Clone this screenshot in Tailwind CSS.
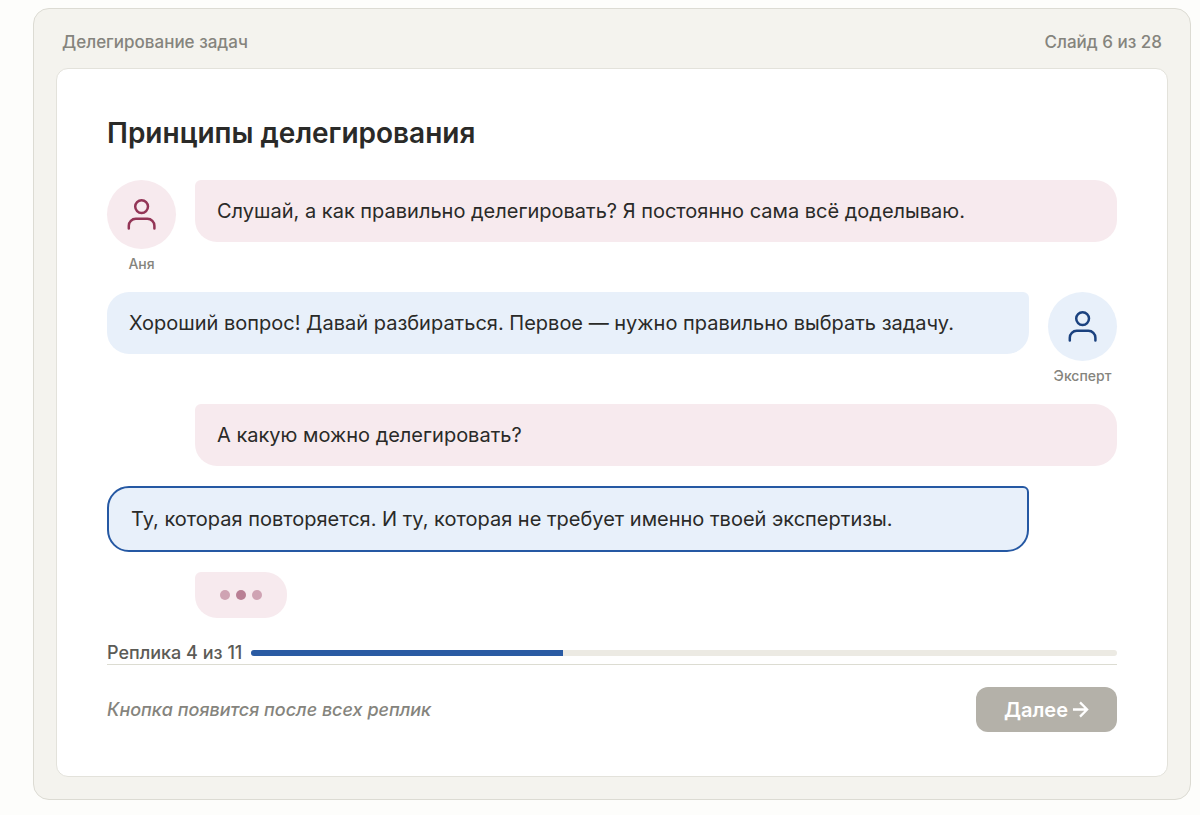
<!DOCTYPE html>
<html lang="ru">
<head>
<meta charset="utf-8">
<meta name="viewport" content="width=device-width, initial-scale=1">
<title>Делегирование задач</title>
<script src="https://cdn.jsdelivr.net/npm/@tailwindcss/browser@4"></script>
</head>
<body class="min-h-screen bg-[#fdfdfb] pt-2 pr-[9px] pb-4 pl-[33px] font-['Inter',sans-serif] text-[#2a2a28]">
<main class="rounded-2xl border border-[#dcdbd3] bg-[#f4f3ee] px-[22px] pb-[22px]">
  <header class="flex items-center justify-between px-[6px] pt-[21px] pb-[14px] text-[17px] leading-6 font-medium text-[#85847d]">
    <span>Делегирование задач</span>
    <span>Слайд 6 из 28</span>
  </header>
  <section class="rounded-xl border border-[#e3e2db] bg-white px-[50px] pt-[46px] pb-[44px]">
    <h1 class="text-[28px] leading-9 font-semibold">Принципы делегирования</h1>
    <div class="mt-[29px] flex flex-col gap-5 text-[20px] leading-[30px]">
      <div class="flex items-start gap-[19px]">
        <div class="flex w-[69px] shrink-0 flex-col items-center gap-1.5">
          <div class="flex size-[69px] items-center justify-center rounded-full bg-[#f7eaee] text-[#933556]">
            <svg class="size-[34px]" viewBox="0 0 34 34" fill="none" stroke="currentColor" stroke-width="2.5" stroke-linecap="round" aria-hidden="true"><circle cx="16.6" cy="8.6" r="6.4"/><path d="M3.8 30.4v-2.6a7 7 0 0 1 7-7h11.6a7 7 0 0 1 7 7v2.6"/></svg>
          </div>
          <span class="text-[14px] leading-[17px] font-medium text-[#85847d]">Аня</span>
        </div>
        <p class="flex-1 rounded-[22px] rounded-tl-md bg-[#f7eaee] px-[22px] py-4">Слушай, а как правильно делегировать? Я постоянно сама всё доделываю.</p>
      </div>
      <div class="flex items-start gap-[19px]">
        <p class="flex-1 rounded-[22px] rounded-tr-md bg-[#e8f0fa] px-[22px] py-4">Хороший вопрос! Давай разбираться. Первое — нужно правильно выбрать задачу.</p>
        <div class="flex w-[69px] shrink-0 flex-col items-center gap-1.5">
          <div class="flex size-[69px] items-center justify-center rounded-full bg-[#e8f0fa] text-[#1b427f]">
            <svg class="size-[34px]" viewBox="0 0 34 34" fill="none" stroke="currentColor" stroke-width="2.5" stroke-linecap="round" aria-hidden="true"><circle cx="16.6" cy="8.6" r="6.4"/><path d="M3.8 30.4v-2.6a7 7 0 0 1 7-7h11.6a7 7 0 0 1 7 7v2.6"/></svg>
          </div>
          <span class="text-[14px] leading-[17px] font-medium text-[#85847d]">Эксперт</span>
        </div>
      </div>
      <p class="ml-[88px] rounded-[22px] rounded-tl-md bg-[#f7eaee] px-[22px] py-4">А какую можно делегировать?</p>
      <p class="mr-[88px] rounded-[22px] rounded-tr-md border-2 border-[#2558a3] bg-[#e8f0fa] px-[22px] py-4">Ту, которая повторяется. И ту, которая не требует именно твоей экспертизы.</p>
      <div class="ml-[88px] flex h-[46px] items-center gap-1.5 self-start rounded-[22px] rounded-tl-md bg-[#f7eaee] px-[25px]" role="status" aria-label="Аня печатает">
        <span class="size-2.5 rounded-full bg-[#cfa3b3]"></span>
        <span class="size-2.5 rounded-full bg-[#b97f94]"></span>
        <span class="size-2.5 rounded-full bg-[#cfa3b3]"></span>
      </div>
    </div>
    <div class="mt-6 flex items-center gap-[9px] text-[18px] leading-[22px] font-medium text-[#5c5b56]">
      <span>Реплика 4 из 11</span>
      <div class="h-1.5 flex-1 overflow-hidden rounded-full bg-[#eceae3]" role="progressbar" aria-label="Реплика 4 из 11" aria-valuemin="0" aria-valuemax="11" aria-valuenow="4">
        <div class="h-full bg-[#2a5ba3]" style="width:36%"></div>
      </div>
    </div>
    <footer class="flex items-center justify-between border-t border-[#dcdcd2] pt-[22px]">
      <p class="text-[18px] leading-6 font-medium text-[#85847d] italic">Кнопка появится после всех реплик</p>
      <button type="button" disabled class="flex h-[45px] items-center gap-1 rounded-xl bg-[#b4b1a9] px-7 text-[20px] leading-6 font-semibold text-white">
        <span>Далее</span>
        <svg class="size-[17px]" viewBox="0 0 18 18" fill="none" stroke="currentColor" stroke-width="2.4" aria-hidden="true"><path d="M1 9h15M8.5 1.5l7.5 7.5-7.5 7.5"/></svg>
      </button>
    </footer>
  </section>
</main>
</body>
</html>
